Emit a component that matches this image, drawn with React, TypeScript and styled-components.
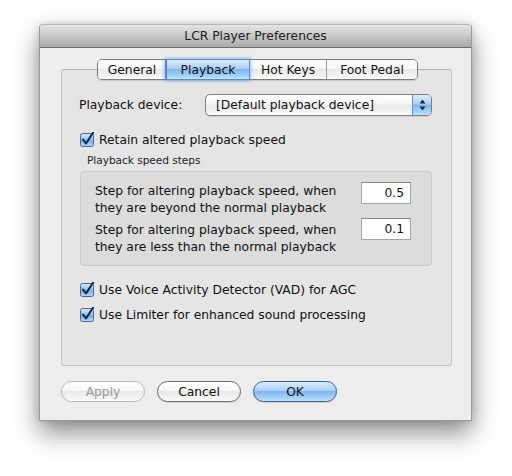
import React from "react";
import styled, { createGlobalStyle, css } from "styled-components";

const GlobalStyle = createGlobalStyle`
  html, body {
    margin: 0;
    padding: 0;
    background: #ffffff;
  }
  body {
    font-family: "DejaVu Sans", "Liberation Sans", sans-serif;
    font-size: 12.3px;
    color: #111;
  }
`;

const aquaBlue = css`
  background: linear-gradient(
    to bottom,
    #dcecfc 0%,
    #a9d0f5 45%,
    #7fb6ec 50%,
    #a6d3fa 85%,
    #c6e4fd 100%
  );
`;

const aquaWhite = css`
  background: linear-gradient(
    to bottom,
    #ffffff 0%,
    #f6f6f6 45%,
    #e9e9e9 50%,
    #f3f3f3 85%,
    #ffffff 100%
  );
`;

const Page = styled.div`
  padding: 24px 0 0 39px;
  width: 512px;
  height: 476px;
  box-sizing: border-box;
`;

const Window = styled.div`
  width: 433px;
  height: 397px;
  background: #ededed;
  border: 1px solid #9a9a9a;
  border-top-color: #b8b8b8;
  border-radius: 4px 4px 0 0;
  box-sizing: border-box;
  box-shadow: 0 12px 26px rgba(0, 0, 0, 0.45), 0 0 8px rgba(0, 0, 0, 0.15);
  display: flex;
  flex-direction: column;
`;

const TitleBar = styled.div`
  height: 23px;
  flex: none;
  display: flex;
  align-items: center;
  justify-content: center;
  background: linear-gradient(to bottom, #e4e4e4 0%, #c8c8c8 50%, #a9a9a9 100%);
  border-bottom: 1px solid #6f6f6f;
  border-radius: 3px 3px 0 0;
  color: #222;
  box-sizing: border-box;
`;

const Body = styled.div`
  flex: 1;
  padding: 11px 19px 0 21px;
  display: flex;
  flex-direction: column;
`;

const TabBar = styled.div`
  align-self: center;
  display: flex;
  height: 21px;
  border: 1px solid #7c7c7c;
  border-radius: 5px;
  box-sizing: border-box;
  position: relative;
  z-index: 1;
  margin-left: 2px;
  box-shadow: 0 1px 1px rgba(0, 0, 0, 0.12);
`;

const Tab = styled.div<{ $active?: boolean; $w: number }>`
  width: ${({ $w }) => $w}px;
  display: flex;
  align-items: center;
  justify-content: center;
  color: #111;
  ${aquaWhite};
  border-left: 1px solid #9a9a9a;

  &:first-child {
    border-left: none;
    border-radius: 4px 0 0 4px;
  }
  &:last-child {
    border-radius: 0 4px 4px 0;
  }

  ${({ $active }) =>
    $active &&
    css`
      ${aquaBlue};
      border-left-color: #5a7fb2;
      box-shadow: 0 0 0 1px #5b8bc9, 0 0 3px 2px rgba(90, 150, 230, 0.6);
      position: relative;
      z-index: 1;
    `}
`;

const Panel = styled.div`
  margin-top: -11px;
  height: 297px;
  background: #e5e5e5;
  border: 1px solid #c4c4c4;
  border-top-color: #b3b3b3;
  border-radius: 3px;
  box-sizing: border-box;
  padding: 24px 19px 0 17px;
  display: flex;
  flex-direction: column;
`;

const DeviceRow = styled.div`
  display: flex;
  align-items: center;
  justify-content: space-between;
  height: 22px;
`;

const Label = styled.span``;

const Popup = styled.div`
  width: 227px;
  height: 22px;
  border: 1px solid #7f7f7f;
  border-radius: 5px;
  box-sizing: border-box;
  display: flex;
  overflow: hidden;
  ${aquaWhite};
  box-shadow: 0 1px 1px rgba(0, 0, 0, 0.1);
`;

const PopupText = styled.span`
  flex: 1;
  padding-left: 10px;
  line-height: 20px;
`;

const PopupArrows = styled.div`
  width: 18px;
  ${aquaBlue};
  border-left: 1px solid #6d8fc0;
  display: flex;
  align-items: center;
  justify-content: center;
`;

const CheckRow = styled.label<{ $top: number }>`
  display: flex;
  align-items: center;
  gap: 4px;
  margin-top: ${({ $top }) => $top}px;
  margin-left: 1px;
  height: 17px;
`;

const GroupCaption = styled.div`
  font-size: 10.5px;
  color: #222;
  margin: 6px 0 0 8px;
  height: 14px;
`;

const GroupBox = styled.div`
  margin-top: 3px;
  margin-left: 1px;
  height: 95px;
  background: #dcdcdc;
  border: 1px solid #c9c9c9;
  border-radius: 4px;
  box-sizing: border-box;
  padding: 11px 20px 0 14px;
  display: flex;
  flex-direction: column;
  gap: 5px;
`;

const StepRow = styled.div`
  display: flex;
  align-items: flex-start;
  justify-content: space-between;
`;

const StepText = styled.div`
  line-height: 17px;
`;

const NumberField = styled.div<{ $offset: number }>`
  width: 50px;
  height: 22px;
  margin-top: ${({ $offset }) => $offset}px;
  background: #fff;
  border: 1px solid #a5a5a5;
  border-top-color: #8a8a8a;
  box-sizing: border-box;
  line-height: 20px;
  text-align: right;
  padding-right: 6px;
`;

const ButtonRow = styled.div`
  display: flex;
  gap: 12px;
  margin-top: 15px;
`;

const PushButton = styled.div<{ $kind?: "default" | "disabled" }>`
  width: 84px;
  height: 21px;
  border-radius: 11px;
  box-sizing: border-box;
  border: 1px solid #6a6a6a;
  display: flex;
  align-items: center;
  justify-content: center;
  color: #111;
  ${aquaWhite};
  box-shadow: 0 1px 1px rgba(0, 0, 0, 0.12);

  ${({ $kind }) =>
    $kind === "default" &&
    css`
      ${aquaBlue};
      border-color: #3f5f94;
    `}

  ${({ $kind }) =>
    $kind === "disabled" &&
    css`
      border-color: #b8b8b8;
      color: #9a9a9a;
      box-shadow: none;
    `}
`;

const CheckBox: React.FC = () => (
  <svg width="15" height="15" viewBox="0 0 15 15">
    <defs>
      <linearGradient id="cbFill" x1="0" y1="0" x2="0" y2="1">
        <stop offset="0" stopColor="#d6eafc" />
        <stop offset="0.5" stopColor="#8fc2f1" />
        <stop offset="0.55" stopColor="#74aee9" />
        <stop offset="1" stopColor="#b9dcfb" />
      </linearGradient>
    </defs>
    <rect x="0.5" y="1.5" width="13" height="13" rx="2" fill="url(#cbFill)" stroke="#46689a" />
    <path d="M3 7.5 L6 11.5 L13 0.8" fill="none" stroke="#14213a" strokeWidth="2" strokeLinecap="round" strokeLinejoin="round" />
  </svg>
);

const Arrows: React.FC = () => (
  <svg width="7" height="12" viewBox="0 0 7 12">
    <path d="M3.5 0.5 L6.5 4.5 L0.5 4.5 Z" fill="#1a2a44" />
    <path d="M3.5 11.5 L6.5 7.5 L0.5 7.5 Z" fill="#1a2a44" />
  </svg>
);

const tabs = [
  { name: "General", w: 68 },
  { name: "Playback", w: 82 },
  { name: "Hot Keys", w: 76 },
  { name: "Foot Pedal", w: 90 },
];

const steps = [
  { lines: ["Step for altering playback speed, when", "they are beyond the normal playback"], value: "0.5", offset: -1 },
  { lines: ["Step for altering playback speed, when", "they are less than the normal playback"], value: "0.1", offset: -4 },
];

const App: React.FC = () => (
  <Page>
    <GlobalStyle />
    <Window>
      <TitleBar>LCR Player Preferences</TitleBar>
      <Body>
        <TabBar>
          {tabs.map((t) => (
            <Tab key={t.name} $w={t.w} $active={t.name === "Playback"}>
              {t.name}
            </Tab>
          ))}
        </TabBar>
        <Panel>
          <DeviceRow>
            <Label>Playback device:</Label>
            <Popup>
              <PopupText>[Default playback device]</PopupText>
              <PopupArrows>
                <Arrows />
              </PopupArrows>
            </Popup>
          </DeviceRow>
          <CheckRow $top={15}>
            <CheckBox />
            Retain altered playback speed
          </CheckRow>
          <GroupCaption>Playback speed steps</GroupCaption>
          <GroupBox>
            {steps.map((s) => (
              <StepRow key={s.value}>
                <StepText>
                  {s.lines[0]}
                  <br />
                  {s.lines[1]}
                </StepText>
                <NumberField $offset={s.offset}>{s.value}</NumberField>
              </StepRow>
            ))}
          </GroupBox>
          <CheckRow $top={15}>
            <CheckBox />
            Use Voice Activity Detector (VAD) for AGC
          </CheckRow>
          <CheckRow $top={8}>
            <CheckBox />
            Use Limiter for enhanced sound processing
          </CheckRow>
        </Panel>
        <ButtonRow>
          <PushButton $kind="disabled">Apply</PushButton>
          <PushButton>Cancel</PushButton>
          <PushButton $kind="default">OK</PushButton>
        </ButtonRow>
      </Body>
    </Window>
  </Page>
);

export default App;
